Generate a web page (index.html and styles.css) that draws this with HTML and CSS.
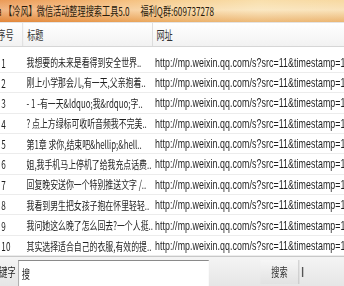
FILE: index.html
```html
<!DOCTYPE html>
<html lang="zh-CN">
<head>
    <meta charset="UTF-8">
    <title>微信活动整理搜索工具</title>
    <link rel="stylesheet" href="styles.css">
</head>
<body>
    <div class="window">
        <div class="titlebar">
            <span class="icon">a</span>
            <span class="caption">【冷风】微信活动整理搜索工具5.0</span>
            <span class="group">福利Q群:609737278</span>
        </div>

        <div class="list">
            <div class="row head">
                <div class="num">序号</div>
                <div class="title">标题</div>
                <div class="url">网址</div>
            </div>
            <div class="gap"></div>
            <div class="row">
                <div class="num">1</div>
                <div class="title">我想要的未来是看得到安全世界..</div>
                <div class="url">http://mp.weixin.qq.com/s?src=11&amp;timestamp=1520334803&amp;ver=736</div>
            </div>
            <div class="row">
                <div class="num">2</div>
                <div class="title">刚上小学那会儿,有一天,父亲抱着..</div>
                <div class="url">http://mp.weixin.qq.com/s?src=11&amp;timestamp=1520334803&amp;ver=736</div>
            </div>
            <div class="row">
                <div class="num">3</div>
                <div class="title">- 1 -有一天&amp;ldquo;我&amp;rdquo;字..</div>
                <div class="url">http://mp.weixin.qq.com/s?src=11&amp;timestamp=1520334803&amp;ver=736</div>
            </div>
            <div class="row">
                <div class="num">4</div>
                <div class="title">? 点上方绿标可收听音频我不完美..</div>
                <div class="url">http://mp.weixin.qq.com/s?src=11&amp;timestamp=1520334803&amp;ver=736</div>
            </div>
            <div class="row">
                <div class="num">5</div>
                <div class="title">第1章 求你,结束吧&amp;hellip;&amp;hell..</div>
                <div class="url">http://mp.weixin.qq.com/s?src=11&amp;timestamp=1520334803&amp;ver=736</div>
            </div>
            <div class="row">
                <div class="num">6</div>
                <div class="title">姐,我手机马上停机了给我充点话费..</div>
                <div class="url">http://mp.weixin.qq.com/s?src=11&amp;timestamp=1520334803&amp;ver=736</div>
            </div>
            <div class="row">
                <div class="num">7</div>
                <div class="title">回复晚安送你一个特别推送文字 /..</div>
                <div class="url">http://mp.weixin.qq.com/s?src=11&amp;timestamp=1520334803&amp;ver=736</div>
            </div>
            <div class="row">
                <div class="num">8</div>
                <div class="title">我看到男生把女孩子抱在怀里轻轻..</div>
                <div class="url">http://mp.weixin.qq.com/s?src=11&amp;timestamp=1520334803&amp;ver=736</div>
            </div>
            <div class="row">
                <div class="num">9</div>
                <div class="title">我问她这么晚了怎么回去?一个人挺..</div>
                <div class="url">http://mp.weixin.qq.com/s?src=11&amp;timestamp=1520334803&amp;ver=736</div>
            </div>
            <div class="row">
                <div class="num">10</div>
                <div class="title">其实选择适合自己的衣服,有效的提..</div>
                <div class="url">http://mp.weixin.qq.com/s?src=11&amp;timestamp=1520334803&amp;ver=736</div>
            </div>
        </div>

        <div class="searchbar">
            <span class="label">关键字</span>
            <div class="input">搜</div>
            <div class="field"></div>
            <div class="button">搜索</div>
            <div class="tick"></div>
        </div>
    </div>
</body>
</html>
```

FILE: styles.css
```css
body {
    margin: 0;
    padding: 0;
    width: 344px;
    height: 286px;
    overflow: hidden;
    background-color: #FFFFFF;
    font-family: 'Noto Sans CJK SC', 'Liberation Sans', sans-serif;
    font-size: 12px;
    color: #1E1E1E;
}

/* the screenshot is squeezed sideways, so the window is laid out wider and scaled */
.window {
    width: 506px;
    height: 286px;
    display: flex;
    flex-direction: column;
    transform: scaleX(0.68);
    transform-origin: 0 0;
}

.titlebar {
    height: 22px;
    display: flex;
    align-items: center;
    gap: 4px;
    white-space: nowrap;
    overflow: hidden;
    background:
        linear-gradient(to bottom, rgba(255, 255, 255, 0.1), rgba(255, 255, 255, 0.35) 45%, rgba(210, 110, 30, 0.3)),
        linear-gradient(to right, #E98F44 0%, #F1A95E 25%, #F6C984 50%, #F8DBA2 75%, #F6D496 100%);
    color: #2A1A0A;
}

.icon {
    margin-left: -4px;
    width: 6px;
    overflow: hidden;
}

.caption {
    margin-left: 0;
}

.group {
    margin-left: 12px;
}

.list {
    flex: 1;
    display: flex;
    flex-direction: column;
}

.row {
    display: grid;
    grid-template-columns: 34px 191px 1fr;
    height: 20.4px;
    align-items: center;
    white-space: nowrap;
    overflow: hidden;
    border-bottom: 1px solid #ECECEC;
    box-sizing: border-box;
}

.row div {
    overflow: hidden;
}

.row.head {
    height: 25px;
    background: linear-gradient(to bottom, #FFFFFF, #F2F2F2);
    border-top: 1px solid #E4E4E4;
    border-bottom: 1px solid #D6D6D6;
    color: #333333;
    align-items: stretch;
}

.row.head div {
    display: flex;
    align-items: center;
    border-right: 1px solid #D2D2D2;
    font-size: 12px;
}

.row.head .num {
    margin-left: -4px;
    padding-left: 0;
}

.row.head .title {
    padding-left: 6px;
}

.row.head .url {
    padding-left: 5px;
    border-right: none;
    font-family: 'Noto Sans CJK SC', sans-serif;
    letter-spacing: 0;
}

.gap {
    height: 5.5px;
}

.num {
    padding-left: 2px;
}

.title {
    padding-left: 5px;
    font-size: 11.6px;
}

.url {
    padding-left: 3px;
    font-family: 'Liberation Sans', sans-serif;
    font-size: 13px;
    letter-spacing: 0.1px;
}

.searchbar {
    height: 30px;
    display: flex;
    align-items: center;
    background: linear-gradient(to bottom, #F4F4F4, #E6E6E6);
    border-top: 1px solid #C8C8C8;
    box-sizing: border-box;
}

.label {
    margin-left: -13px;
    width: 40px;
    flex: none;
}

.input {
    align-self: flex-end;
    height: 26px;
    width: 280px;
    padding-left: 4px;
    box-sizing: border-box;
    background-color: #FFFFFF;
    border-top: 1px solid #8A8A8A;
    border-left: 1px solid #8A8A8A;
    display: flex;
    align-items: center;
}

.field {
    flex: 1;
}

.button {
    width: 56px;
    height: 24px;
    display: flex;
    align-items: center;
    justify-content: center;
    background: linear-gradient(to bottom, #F6F6F6, #E2E2E2);
    border-right: 1px solid #B4B4B4;
    color: #333333;
}

.tick {
    width: 2px;
    height: 10px;
    margin-left: 4px;
    margin-right: 60px;
    background-color: #555555;
}
```
